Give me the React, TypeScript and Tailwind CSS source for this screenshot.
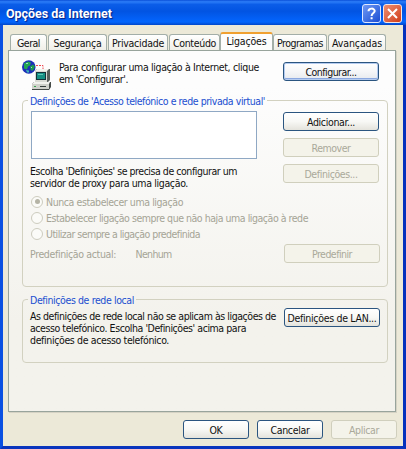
import { useLayoutEffect, useRef, useState } from "react";
import clsx from "clsx";

/** One line of text whose tracking is spread so that it spans `w` pixels. */
function Line({ children, w, className }: { children: string; w: number; className?: string }) {
  const ref = useRef<HTMLSpanElement>(null);
  const [tracking, setTracking] = useState(0);
  useLayoutEffect(() => {
    if (!ref.current) return;
    const natural = ref.current.getBoundingClientRect().width;
    setTracking((t) => t + (w - natural) / children.length);
  }, [w, children]);
  return (
    <span className={clsx("block w-fit shrink-0 whitespace-nowrap", className)} ref={ref} style={{ letterSpacing: `${tracking}px` }}>
      {children}
    </span>
  );
}

type ButtonProps = { label: string; w: number; kind?: "normal" | "default" | "disabled"; className?: string };

function Button({ label, w, kind = "normal", className }: ButtonProps) {
  return (
    <button
      type="button"
      disabled={kind === "disabled"}
      className={clsx(
        "flex h-[19px] shrink-0 items-center justify-center rounded-[3px] border",
        kind === "disabled" && "border-[#d0cfbd] bg-[#f4f3ea] text-[#aaa99a]",
        kind === "normal" && "border-[#2b5580] bg-linear-to-b from-white via-[#f8f8f5] to-[#e4e3dc]",
        kind === "default" &&
          "border-[#2b5580] bg-linear-to-b from-white via-[#f5f6f8] to-[#e6e9ee] shadow-[inset_0_0_0_1px_#b4cbf0,inset_0_-2px_0_#8ba8e0]",
        className,
      )}
    >
      <Line w={w}>{label}</Line>
    </button>
  );
}

function Tab({ label, w, width }: { label: string; w: number; width: string }) {
  return (
    <div className={clsx("flex h-4 justify-center rounded-t-[3px] border border-b-0 border-[#a3aea8] bg-linear-to-b from-white to-[#f0efe8] pt-[2px]", width)}>
      <Line w={w}>{label}</Line>
    </div>
  );
}

function Radio({ label, w, checked }: { label: string; w: number; checked?: boolean }) {
  return (
    <div className="flex h-[13px] items-center gap-[3px]">
      <span className="flex size-[12px] items-center justify-center rounded-full border border-[#cdccbf] bg-[#fbfbf8]">
        {checked && <span className="size-[5px] rounded-full bg-[#b5b4a6]" />}
      </span>
      <Line w={w}>{label}</Line>
    </div>
  );
}

function NetworkIcon() {
  return (
    <svg width="30" height="30" viewBox="0 0 30 30" className="shrink-0" aria-hidden>
      <circle cx="6.800" cy="7" r="6.800" fill="#1c2fb8" />
      <path d="M2 3.500l4-2 3 1-1 3-2 1-1 3-3-1z" fill="#21a452" />
      <path d="M8 6.500l3-2 2 2-2 4-2 0z" fill="#1c9a4c" />
      <path d="M4 10l3 .5v2H5z" fill="#3fb8b8" />
      <path d="M4 3h2v1H4zM9 7h1v1H9z" fill="#9be0c0" />
      <path d="M14 5.500h7v4" fill="none" stroke="#ee4a50" strokeDasharray="2 1" />
      <path d="M13 21V11l2-2h13v11l-2 2z" fill="#5a605d" />
      <path d="M13 11h12v11H13z" fill="#d9dbd4" />
      <path d="M13 11l2-2h12l-2 2z" fill="#f2f3ee" />
      <path d="M14 12h10v8H14z" fill="#12323a" />
      <path d="M15 13h8v6h-8z" fill="#159084" />
      <path d="M16 14h5v1h-5z" fill="#60c5b8" />
      <path d="M10 24l2-2h17v5l-2 3H10z" fill="#454b48" />
      <path d="M10 24h17v5H10z" fill="#cfd1ca" />
      <path d="M10 24l2-2h16l-1 2z" fill="#f1f2ed" />
      <path d="M18 26h6v1h-6z" fill="#37403d" />
      <path d="M12 26h2v1h-2z" fill="#36a34b" />
    </svg>
  );
}

export default function App() {
  return (
    <div className="flex h-[449px] w-[406px] flex-col overflow-hidden bg-[#0b3fd6] font-['DejaVu_Sans_Condensed','DejaVu_Sans',sans-serif] text-[10.5px] leading-[12px] text-[#111]">
      <header className="flex h-[25px] shrink-0 items-start justify-between bg-[linear-gradient(to_bottom,#0a4fd8_0%,#2c7df8_7%,#0b5de8_18%,#0254e2_45%,#0360f6_75%,#0366fc_88%,#0146c8_100%)] pl-[6px] pr-[4px] text-white">
        <Line w={106} className="pt-[7px] font-['Roboto','Noto_Sans',sans-serif] text-[12.5px] leading-[14px] font-bold [text-shadow:1px_1px_1px_#0a1f80]">
          Opções da Internet
        </Line>
        <div className="flex gap-[2px] pt-[4px]">
          <span className="flex size-[19px] items-center justify-center rounded-[3px] border border-[#dfe8ff] bg-linear-135 from-[#6f98f4] to-[#1b4bd2]">
            <svg width="11" height="13" viewBox="0 0 11 13" fill="none" stroke="#fff" strokeWidth="2" aria-hidden>
              <path d="M2.500 4.200C2.500 .8 8.700 .8 8.700 4C8.700 6 5.600 6 5.600 9M5.600 10.300v2" />
            </svg>
          </span>
          <span className="flex size-[19px] items-center justify-center rounded-[3px] border border-[#f7e6e2] bg-linear-135 from-[#ee8d70] to-[#cf3a12]">
            <svg width="11" height="11" viewBox="0 0 11 11" stroke="#fff" strokeWidth="2" aria-hidden>
              <path d="M1 1l9 9M10 1l-9 9" />
            </svg>
          </span>
        </div>
      </header>

      <div className="flex grow flex-col border-x-[3px] border-b-[3px] border-r-[#0430bd] border-b-[#0a35bd] border-l-[#0a50e2]">
        <div className="flex grow flex-col bg-[#ece9d8] pl-[5px] pr-[6px] pt-[7px]">
          <nav className="flex h-[18px] items-end pl-[2px]">
            <Tab label="Geral" w={23} width="w-[37px]" />
            <span className="w-px" />
            <Tab label="Segurança" w={48} width="w-[59px]" />
            <span className="w-px" />
            <Tab label="Privacidade" w={52} width="w-[60px]" />
            <span className="w-px" />
            <Tab label="Conteúdo" w={43} width="w-[51px]" />
            <div className="-mb-px flex h-[19px] w-[53px] justify-center rounded-t-[3px] border-x border-t-2 border-x-[#a3aea8] border-t-[#f0a030] bg-[#fdfdfd] pt-[1px]">
              <Line w={40}>Ligações</Line>
            </div>
            <Tab label="Programas" w={46} width="w-[54px]" />
            <span className="w-px" />
            <Tab label="Avançadas" w={50} width="w-[58px]" />
          </nav>

          <main className="flex h-[362px] w-[388px] flex-col border border-[#98a49c] bg-linear-to-b from-[#fdfdfd] from-10% to-[#f3f2ec] to-75% px-[13px] pt-[9px] shadow-[1px_1px_0_#d5d2c4]">
            <section className="flex h-10 shrink-0 items-start">
              <NetworkIcon />
              <div className="ml-[7px] w-[224px] pt-px">
                <Line w={200}>Para configurar uma ligação à Internet, clique</Line>
                <Line w={69}>em 'Configurar'.</Line>
              </div>
              <Button label="Configurar..." w={51} kind="default" className="mt-[2px] w-[96px]" />
            </section>

            <section className="h-[187px] w-[366px] shrink-0 rounded-[4px] border border-[#d2d1c0] px-[7px]">
              <h2 className="-mt-[6px] -ml-[2px] w-fit bg-[#fcfcfc] px-[2px] text-[#1b4fd0]">
                <Line w={235}>Definições de 'Acesso telefónico e rede privada virtual'</Line>
              </h2>
              <div className="flex pt-[4px]">
                <div className="w-[253px]">
                  <div className="ml-px h-12 w-[226px] border border-[#8fa8c4] bg-white" />
                  <div className="pt-[6px]">
                    <Line w={207}>Escolha 'Definições' se precisa de configurar um</Line>
                    <Line w={158}>servidor de proxy para uma ligação.</Line>
                  </div>
                </div>
                <div className="flex flex-col gap-[7px] pt-px">
                  <Button label="Adicionar..." w={48} className="w-[96px]" />
                  <Button label="Remover" w={39} kind="disabled" className="w-[96px]" />
                  <Button label="Definições..." w={53} kind="disabled" className="w-[96px]" />
                </div>
              </div>
              <div className="flex flex-col gap-[3px] pl-px pt-[6px] text-[#a5a496]">
                <Radio label="Nunca estabelecer uma ligação" w={137} checked />
                <Radio label="Estabelecer ligação sempre que não haja uma ligação à rede" w={262} />
                <Radio label="Utilizar sempre a ligação predefinida" w={154} />
              </div>
              <div className="flex items-start pt-[4px] text-[#a5a496]">
                <div className="w-[106px] pt-[4px]">
                  <Line w={86}>Predefinição actual:</Line>
                </div>
                <div className="w-[149px] pt-[4px]">
                  <Line w={36}>Nenhum</Line>
                </div>
                <Button label="Predefinir" w={40} kind="disabled" className="w-[96px]" />
              </div>
            </section>

            <section className="mt-[12px] h-[64px] w-[366px] shrink-0 rounded-[4px] border border-[#d2d1c0] px-[7px]">
              <h2 className="-mt-[6px] -ml-[2px] w-fit bg-[#f4f3ee] px-[2px] text-[#1b4fd0]">
                <Line w={104}>Definições de rede local</Line>
              </h2>
              <div className="flex pt-[2px]">
                <div className="w-[255px] pt-[2px]">
                  <Line w={246}>As definições de rede local não se aplicam às ligações de</Line>
                  <Line w={216}>acesso telefónico. Escolha 'Definições' acima para</Line>
                  <Line w={139}>definições de acesso telefónico.</Line>
                </div>
                <Button label="Definições de LAN..." w={89} className="w-[96px]" />
              </div>
            </section>
          </main>

          <footer className="flex justify-end gap-[8px] pt-[8px]">
            <Button label="OK" w={13} className="w-[66px]" />
            <Button label="Cancelar" w={39} className="w-[66px]" />
            <Button label="Aplicar" w={30} kind="disabled" className="w-[66px]" />
          </footer>
        </div>
      </div>
    </div>
  );
}
